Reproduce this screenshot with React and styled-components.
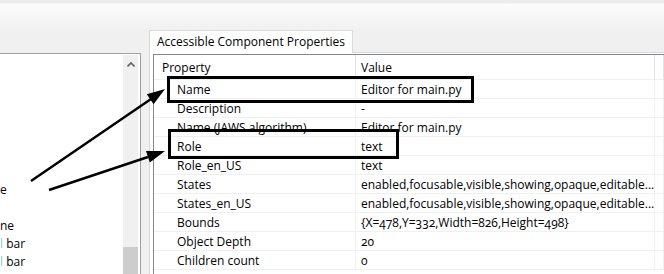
import React from 'react';
import styled, { createGlobalStyle } from 'styled-components';

const GlobalStyle = createGlobalStyle`
  html, body {
    margin: 0;
    padding: 0;
  }
  body {
    font-family: "Open Sans", "Noto Sans", sans-serif;
    font-size: 12px;
    color: #000;
  }
`;

// whole window
const Screen = styled.div`
  position: relative;
  display: flex;
  width: 664px;
  height: 274px;
  overflow: hidden;
  background: linear-gradient(#ececec 0, #ececec 3px, #fcfcfc 4px, #f0f0f0 32px, #f0f0f0 100%);
`;

// left tree panel
const LeftPanel = styled.div`
  display: flex;
  flex-shrink: 0;
  width: 140px;
  margin-top: 53px;
  background: #fff;
  border-top: 1px solid #a0a0a0;
  border-right: 1px solid #a0a0a0;
`;

const TreeList = styled.div`
  flex: 1;
  overflow: hidden;
  padding-top: 127px;
`;

const TreeItem = styled.div`
  height: 18px;
  line-height: 18px;
  white-space: nowrap;
`;

const Tinted = styled.span`
  color: #86c8e6;
`;

const ScrollBar = styled.div`
  display: flex;
  flex-direction: column;
  width: 15px;
  margin: 1px 2px 0 0;
  background: #f0f0f0;
`;

const ScrollArrow = styled.div`
  display: flex;
  justify-content: center;
  padding-top: 7px;
  height: 10px;
`;

const ScrollThumb = styled.div`
  margin-top: auto;
  height: 27px;
  background: #cdcdcd;
`;

// right side with tab
const RightArea = styled.div`
  display: flex;
  flex: 1;
  flex-direction: column;
  margin-left: 8px;
  padding-top: 30px;
`;

const Tab = styled.div`
  position: relative;
  z-index: 1;
  align-self: flex-start;
  height: 22px;
  padding: 0 7px;
  margin-bottom: -1px;
  line-height: 21px;
  background: #fff;
  border: 1px solid #d9d9d9;
  border-bottom: none;
  white-space: nowrap;
`;

const Pane = styled.div`
  display: flex;
  flex: 1;
  padding: 1px 0 0 3px;
  background: #fff;
  border-top: 1px solid #d9d9d9;
  border-left: 1px solid #d9d9d9;
`;

const Table = styled.div`
  flex: 1;
  border-top: 1px solid #828790;
  border-left: 1px solid #828790;
  font-variant-numeric: oldstyle-nums;
`;

const Row = styled.div`
  display: grid;
  grid-template-columns: 202px 299px 1fr;
  height: ${props => (props.header ? 25 : 19)}px;
`;

const Cell = styled.div`
  padding: 2px 0 0 ${props => props.pad || 0}px;
  line-height: ${props => (props.header ? 22 : 16)}px;
  white-space: nowrap;
  overflow: hidden;
  border-right: 1px solid ${props => (props.header ? '#e2e2e2' : '#f0f0f0')};
  border-bottom: 1px solid #f0f0f0;
`;

const Overlay = styled.svg`
  position: absolute;
  left: 0;
  top: 0;
  pointer-events: none;
`;

const rows = [
  ['Name', 'Editor for main.py'],
  ['Description', '-'],
  ['Name (JAWS algorithm)', 'Editor for main.py'],
  ['Role', 'text'],
  ['Role_en_US', 'text'],
  ['States', 'enabled,focusable,visible,showing,opaque,editable...'],
  ['States_en_US', 'enabled,focusable,visible,showing,opaque,editable...'],
  ['Bounds', '{X=478,Y=332,Width=826,Height=498}'],
  ['Object Depth', '20'],
  ['Children count', '0'],
];

export default function App() {
  return (
    <>
      <GlobalStyle />
      <Screen>
        <LeftPanel>
          <TreeList>
            <TreeItem>e</TreeItem>
            <TreeItem />
            <TreeItem>ne</TreeItem>
            <TreeItem><Tinted>l</Tinted> bar</TreeItem>
            <TreeItem><Tinted>l</Tinted> bar</TreeItem>
          </TreeList>
          <ScrollBar>
            <ScrollArrow>
              <svg width="8" height="5" viewBox="0 0 8 5">
                <polyline points="0.5,4.5 4,1 7.5,4.5" fill="none" stroke="#606060" strokeWidth="1.6" />
              </svg>
            </ScrollArrow>
            <ScrollThumb />
          </ScrollBar>
        </LeftPanel>

        <RightArea>
          <Tab>Accessible Component Properties</Tab>
          <Pane>
            <Table>
              <Row header>
                <Cell header pad={8}>Property</Cell>
                <Cell header pad={5}>Value</Cell>
                <Cell header />
              </Row>
              {rows.map(([name, value]) => (
                <Row key={name}>
                  <Cell pad={23}>{name}</Cell>
                  <Cell pad={5}>{value}</Cell>
                  <Cell />
                </Row>
              ))}
            </Table>
          </Pane>
        </RightArea>

        <Overlay width="664" height="274" viewBox="0 0 664 274">
          <rect x="168.5" y="77.5" width="304" height="24" fill="none" stroke="#000" strokeWidth="3" />
          <rect x="169.5" y="130.5" width="228" height="27" fill="none" stroke="#000" strokeWidth="3" />
          <line x1="31" y1="181" x2="151" y2="99" stroke="#000" strokeWidth="2.5" />
          <polygon points="165,89 153.6,104.2 146.8,94.2" fill="#000" />
          <line x1="49" y1="190" x2="148" y2="157" stroke="#000" strokeWidth="2.5" />
          <polygon points="165,151 149.8,162.4 146,151" fill="#000" />
        </Overlay>
      </Screen>
    </>
  );
}
